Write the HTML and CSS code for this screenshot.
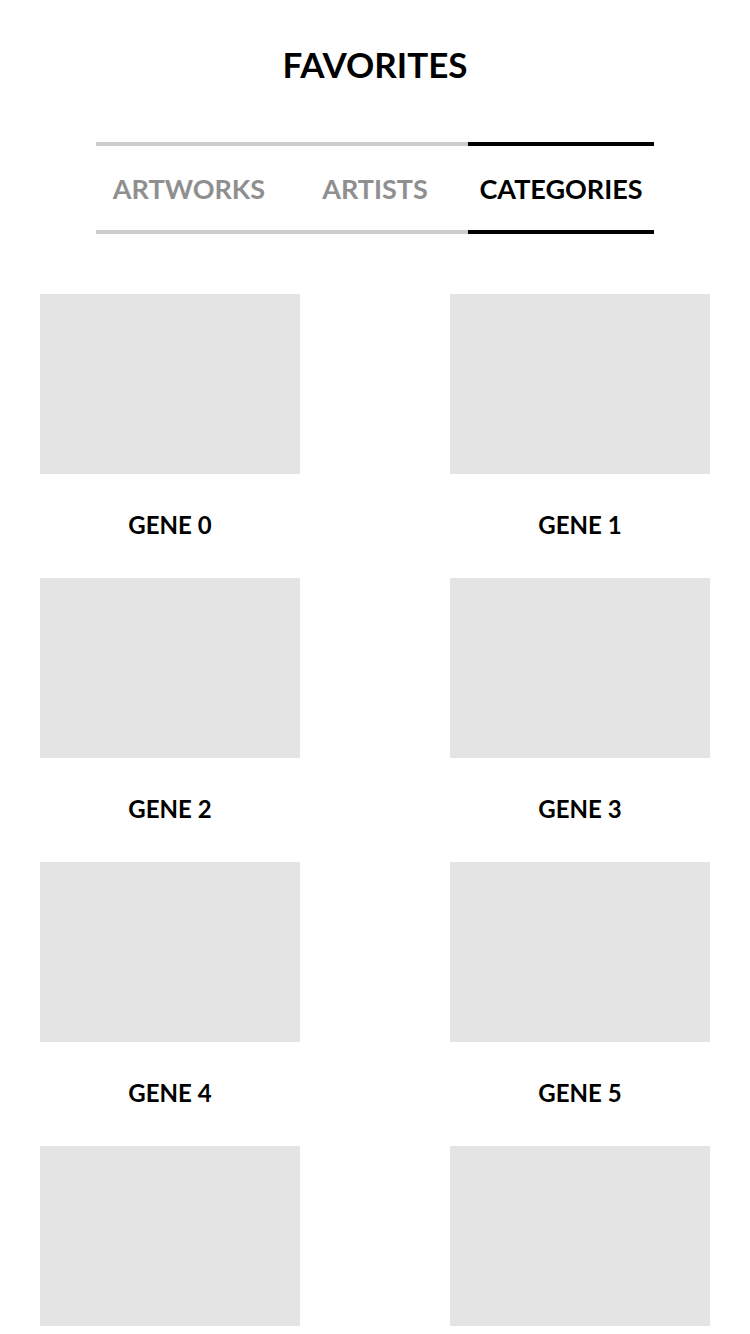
FILE: index.html
```html
<!DOCTYPE html>
<html>
<head>
<meta charset="utf-8">
<link rel="stylesheet" href="styles.css">
</head>
<body>
<div class="page">
  <h1 class="title">FAVORITES</h1>
  <nav class="tabs">
    <div class="tab">ARTWORKS</div>
    <div class="tab">ARTISTS</div>
    <div class="tab active">CATEGORIES</div>
  </nav>
  <div class="grid">
    <div class="item"><div class="thumb"></div><div class="label">GENE 0</div></div>
    <div class="item"><div class="thumb"></div><div class="label">GENE 1</div></div>
    <div class="item"><div class="thumb"></div><div class="label">GENE 2</div></div>
    <div class="item"><div class="thumb"></div><div class="label">GENE 3</div></div>
    <div class="item"><div class="thumb"></div><div class="label">GENE 4</div></div>
    <div class="item"><div class="thumb"></div><div class="label">GENE 5</div></div>
    <div class="item"><div class="thumb"></div></div>
    <div class="item"><div class="thumb"></div></div>
  </div>
</div>
</body>
</html>
```
FILE: styles.css
```css
html, body {
  margin: 0;
  padding: 0;
  background: #fff;
}
body {
  font-family: "Lato", "Liberation Sans", sans-serif;
  color: #000;
}
.page {
  padding-top: 42px;
}
.title {
  margin: 0;
  font-size: 35px;
  line-height: 44px;
  font-weight: 700;
  text-align: center;
}
.tabs {
  display: flex;
  width: 558px;
  margin: 56px auto 0;
}
.tab {
  flex: 1;
  height: 84px;
  border-top: 4px solid #cccccc;
  border-bottom: 4px solid #cccccc;
  display: flex;
  align-items: center;
  justify-content: center;
  font-size: 27px;
  font-weight: 700;
  color: #8f8f8f;
}
.tab.active {
  border-color: #000;
  color: #000;
}
.grid {
  display: grid;
  grid-template-columns: 260px 260px;
  column-gap: 150px;
  padding: 60px 40px 0;
}
.thumb {
  height: 180px;
  background: #e4e4e4;
}
.label {
  height: 104px;
  display: flex;
  align-items: center;
  justify-content: center;
  font-size: 24px;
  font-weight: 700;
  padding-bottom: 4px;
  box-sizing: border-box;
}
```
